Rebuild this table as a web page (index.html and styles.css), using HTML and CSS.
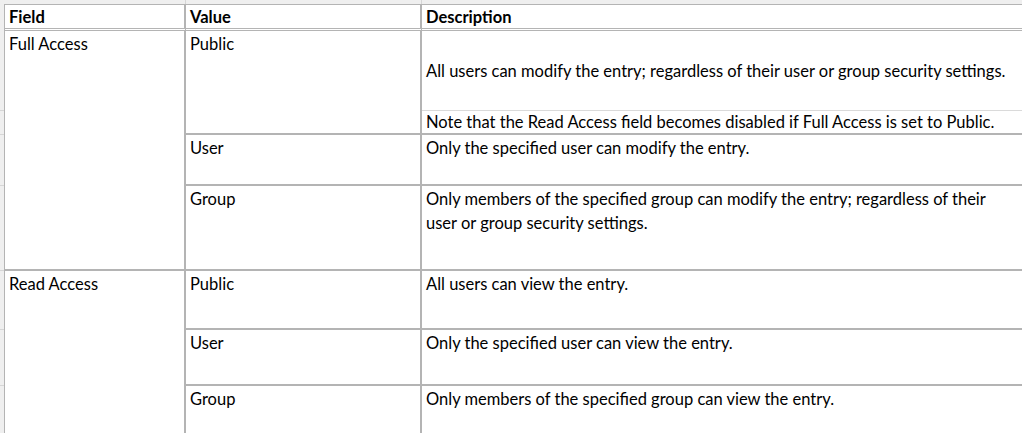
FILE: index.html
```html
<!DOCTYPE html>
<html>
<head>
<meta charset="utf-8">
<title>Access fields</title>
<link rel="stylesheet" href="styles.css">
</head>
<body>
<table class="grid">
  <colgroup>
    <col class="c-gut">
    <col class="c-field">
    <col class="c-value">
    <col class="c-desc">
  </colgroup>
  <tr class="r-top">
    <td class="gut gut-top"></td>
    <td class="top top-tick"></td>
    <td class="top top-tick"></td>
    <td class="top"></td>
  </tr>
  <tr class="r-head">
    <td class="gut"></td>
    <th class="field head">Field</th>
    <th class="value head">Value</th>
    <th class="desc head">Description</th>
  </tr>
  <tr class="r1">
    <td class="gut tick"></td>
    <td class="field" rowspan="4">Full Access</td>
    <td class="value" rowspan="2">Public</td>
    <td class="desc mid sub">All users can modify the entry; regardless of their user or group security settings.</td>
  </tr>
  <tr class="r2">
    <td class="gut tick"></td>
    <td class="desc mid tight">Note that the Read Access field becomes disabled if Full Access is set to Public.</td>
  </tr>
  <tr class="r3">
    <td class="gut tick"></td>
    <td class="value">User</td>
    <td class="desc">Only the specified user can modify the entry.</td>
  </tr>
  <tr class="r4">
    <td class="gut tick"></td>
    <td class="value">Group</td>
    <td class="desc">Only members of the specified group can modify the entry; regardless of their<br>user or group security settings.</td>
  </tr>
  <tr class="r5">
    <td class="gut tick"></td>
    <td class="field" rowspan="3">Read Access</td>
    <td class="value">Public</td>
    <td class="desc">All users can view the entry.</td>
  </tr>
  <tr class="r6">
    <td class="gut tick"></td>
    <td class="value">User</td>
    <td class="desc">Only the specified user can view the entry.</td>
  </tr>
  <tr class="r7">
    <td class="gut"></td>
    <td class="value">Group</td>
    <td class="desc">Only members of the specified group can view the entry.</td>
  </tr>
</table>
</body>
</html>
```

FILE: styles.css
```css
html, body {
  margin: 0;
  padding: 0;
  background: #ffffff;
  overflow: hidden;
}

.grid {
  border-collapse: separate;
  border-spacing: 0;
  table-layout: fixed;
  width: 1102px;
  font-family: Lato, "Liberation Sans", sans-serif;
  font-size: 16.5px;
  line-height: 24px;
  color: #000;
}

.c-gut { width: 4px; }
.c-field { width: 182px; }
.c-value { width: 236px; }
.c-desc { width: 680px; }

.grid td, .grid th {
  box-sizing: border-box;
  padding: 1px 0 0 4px;
  vertical-align: top;
  text-align: left;
  white-space: nowrap;
  font-weight: normal;
}

.grid .gut {
  padding: 0;
  background: #efefef;
}
.grid .gut.tick {
  border-bottom: 1px solid #d6d6d6;
}

.r-top { height: 4px; }
.grid .top {
  padding: 0;
  background: #efefef;
}
.grid .top-tick {
  border-right: 1px solid #d6d6d6;
}

.r-head { height: 27px; }
.grid .head {
  font-weight: bold;
  line-height: 21px;
  padding-top: 2px;
  border-top: 1px solid #b4b4b4;
  border-bottom: 3px double #b4b4b4;
}

.grid .field {
  border-left: 1px solid #b4b4b4;
  border-right: 2px solid #b4b4b4;
  border-bottom: 2px solid #b4b4b4;
}
.grid .value {
  border-right: 2px solid #b4b4b4;
  border-bottom: 2px solid #b4b4b4;
}
.grid .desc {
  border-bottom: 2px solid #b4b4b4;
}
.grid .head.field,
.grid .head.value,
.grid .head.desc {
  border-bottom: 3px double #b4b4b4;
}

.grid .mid {
  vertical-align: middle;
  padding-top: 0;
}
.grid .desc.sub { border-bottom: 1px solid #dadada; }
.grid .tight { line-height: 22px; }

.r1 { height: 80px; }
.r2 { height: 24px; }
.r3 { height: 51px; }
.r4 { height: 85px; }
.r5 { height: 59px; }
.r6 { height: 56px; }
.r7 { height: 70px; }
```
